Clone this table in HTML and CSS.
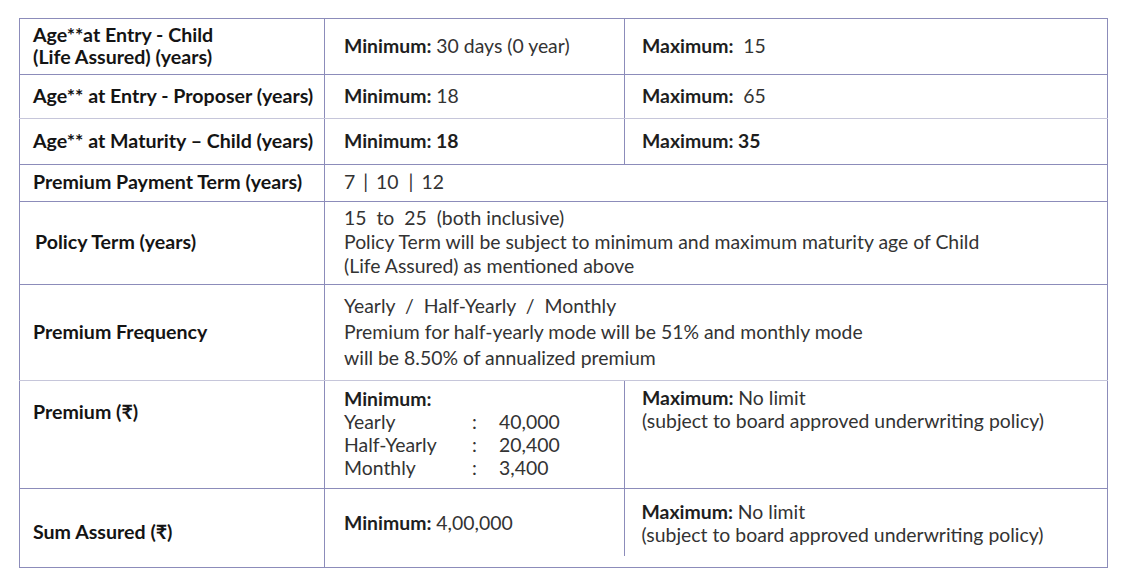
FILE: index.html
```html
<!DOCTYPE html>
<html>
<head>
<meta charset="utf-8">
<link rel="stylesheet" href="styles.css">
</head>
<body>
<div class="wrap">
<table class="spec">
  <colgroup>
    <col class="c1"><col class="c2"><col class="c3">
  </colgroup>
  <tr class="r1">
    <th>Age**at Entry - Child<br>(Life Assured) (years)</th>
    <td><b>Minimum:</b> 30 days (0 year)</td>
    <td class="mx"><b>Maximum:</b>&nbsp; 15</td>
  </tr>
  <tr class="r2 light">
    <th>Age** at Entry - Proposer (years)</th>
    <td><b>Minimum:</b> 18</td>
    <td class="mx"><b>Maximum:</b>&nbsp; 65</td>
  </tr>
  <tr class="r3">
    <th>Age** at Maturity – Child (years)</th>
    <td><b>Minimum: 18</b></td>
    <td class="mx"><b>Maximum: 35</b></td>
  </tr>
  <tr class="r4">
    <th>Premium Payment Term (years)</th>
    <td colspan="2">7<span class="sep">|</span>10<span class="sep wide">|</span>12</td>
  </tr>
  <tr class="r5">
    <th class="ind">Policy Term (years)</th>
    <td colspan="2" class="lh24">15 &nbsp;to &nbsp;25 &nbsp;(both inclusive)<br>Policy Term will be subject to minimum and maximum maturity age of Child<br>(Life Assured) as mentioned above</td>
  </tr>
  <tr class="r6 light">
    <th>Premium Frequency</th>
    <td colspan="2" class="lh26">Yearly &nbsp;/ &nbsp;Half-Yearly &nbsp;/ &nbsp;Monthly<br>Premium for half-yearly mode will be 51% and monthly mode<br>will be 8.50% of annualized premium</td>
  </tr>
  <tr class="r7">
    <th class="top7">Premium (₹)</th>
    <td class="min7 lh23"><b>Minimum:</b>
      <div class="mins">
        <span>Yearly</span><span>:</span><span>40,000</span>
        <span>Half-Yearly</span><span>:</span><span>20,400</span>
        <span>Monthly</span><span>:</span><span>3,400</span>
      </div>
    </td>
    <td class="mx top lh23"><b>Maximum:</b> No limit<br>(subject to board approved underwriting policy)</td>
  </tr>
  <tr class="r8">
    <th class="low">Sum Assured (₹)</th>
    <td class="min8"><b>Minimum:</b> 4,00,000</td>
    <td class="mx top8 lh23"><span class="cut"></span><b>Maximum:</b> No limit<br>(subject to board approved underwriting policy)</td>
  </tr>
</table>
</div>
</body>
</html>
```

FILE: styles.css
```css
html, body {
  margin: 0;
  padding: 0;
  background: #ffffff;
}
.wrap {
  padding: 18px 0 0 19px;
}
.spec {
  border-collapse: collapse;
  table-layout: fixed;
  width: 1088px;
  font-family: Lato, "Noto Sans", sans-serif;
  font-size: 19.4px;
  color: #333333;
  border: 1px solid #8c8cba;
}
.c1 { width: 305px; }
.c2 { width: 300px; }
.c3 { width: 483px; }
.spec th, .spec td {
  border: 1px solid #8c8cba;
  vertical-align: middle;
  text-align: left;
  padding: 0 0 2px 19px;
  line-height: 22px;
}
.spec th {
  font-weight: 700;
  color: #141414;
  padding-left: 13px;
  line-height: 22px;
  font-size: 19.6px;
}
.spec td.mx { padding-left: 17px; }
.spec b { font-weight: 700; color: #1e1e1e; }
.sep { margin: 0 8px; }
.sep.wide { margin-left: 10px; }
.r1 { height: 56px; }
.r2 { height: 44px; }
.r3 { height: 46px; }
.r4 { height: 37px; }
.r5 { height: 83px; }
.r6 { height: 96px; }
.r7 { height: 108px; }
.r8 { height: 79px; }
.r2 th, .r2 td { border-bottom-color: #c6c6da; }
.r6 th, .r6 td { border-bottom-color: #c6c6da; }
.spec th.ind { padding-left: 15px; }
.lh24 { line-height: 24px !important; }
.lh26 { line-height: 26px !important; }
.lh23 { line-height: 23px !important; }
.mins {
  display: grid;
  grid-template-columns: 128px 27px auto;
}
.spec td.min7 { vertical-align: top; padding-top: 6px; }
.spec .top { vertical-align: top; padding-top: 5px; }
.spec th.top7 { vertical-align: top; padding-top: 20px; }
.spec th.low { vertical-align: top; padding-top: 32px; }
.spec td.min8 { vertical-align: top; padding-top: 23px; border-right: none; }
.spec td.top8 {
  vertical-align: top;
  padding-top: 11px;
  border-left: none;
  position: relative;
}
.cut {
  position: absolute;
  left: -1px;
  top: 0;
  bottom: 11px;
  width: 1px;
  background: #8c8cba;
}
```
